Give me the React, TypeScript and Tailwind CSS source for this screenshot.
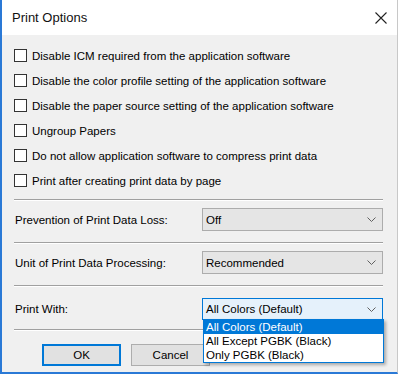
import React from "react";

const checks = [
  "Disable ICM required from the application software",
  "Disable the color profile setting of the application software",
  "Disable the paper source setting of the application software",
  "Ungroup Papers",
  "Do not allow application software to compress print data",
  "Print after creating print data by page",
];

function Sep() {
  return (
    <div className="flex flex-col">
      <div className="h-px bg-[#a0a0a0]" />
      <div className="h-px bg-white" />
    </div>
  );
}

function Chevron() {
  return (
    <svg width="9" height="5" viewBox="0 0 9 5" className="shrink-0">
      <path d="M0.5 0.5 L4.5 4.5 L8.5 0.5" fill="none" stroke="#606060" strokeWidth="1" />
    </svg>
  );
}

function Select({ value, focused }: { value: string; focused?: boolean }) {
  return (
    <div
      className={
        focused
          ? "w-[181px] h-[22px] border border-[#0078d7] bg-[#e5f1fb] flex items-center justify-between pl-[3px] pr-[6px]"
          : "w-[181px] h-[23px] border border-[#acacac] bg-[#e5e5e5] flex items-center justify-between pl-[3px] pr-[6px]"
      }
    >
      <span className="text-black">{value}</span>
      <Chevron />
    </div>
  );
}

export default function App() {
  return (
    <div className="w-[400px] h-[376px] bg-white overflow-hidden relative text-[11.5px] leading-[14px] text-black" style={{ fontFamily: '"Liberation Sans", Arial, sans-serif' }}>
      <div className="w-[398px] h-[374px] border-l-2 border-b-2 border-r border-l-[#2a79d6] border-b-[#2a79d6] border-r-[#c8c8c8] flex flex-col">
        <div className="h-[35px] bg-white flex items-center justify-between pl-[10px] pr-[10px]">
          <span className="text-[13px] text-[#111]">Print Options</span>
          <svg width="12" height="12" viewBox="0 0 12 12">
            <path d="M0.5 0.5 L11.5 11.5 M11.5 0.5 L0.5 11.5" stroke="#222" strokeWidth="1.1" />
          </svg>
        </div>
        <div className="flex-1 bg-[#f0f0f0] pl-[12px] pr-[14px] pt-[8px] flex flex-col">
          <div className="flex flex-col">
            {checks.map((c) => (
              <div key={c} className="h-[25px] flex items-center gap-[5px]">
                <div className="w-[13px] h-[13px] border border-[#333] bg-white shrink-0" />
                <span>{c}</span>
              </div>
            ))}
          </div>
          <div className="mt-[6px]">
            <Sep />
          </div>
          <div className="pt-[7px] pb-[11px] flex items-center justify-between">
            <span className="ml-px">Prevention of Print Data Loss:</span>
            <Select value="Off" />
          </div>
          <Sep />
          <div className="pt-[7px] pb-[11px] flex items-center justify-between">
            <span className="ml-px">Unit of Print Data Processing:</span>
            <Select value="Recommended" />
          </div>
          <Sep />
          <div className="pt-[11px] pb-[9px] flex items-center justify-between">
            <span className="ml-px">Print With:</span>
            <Select value="All Colors (Default)" focused />
          </div>
          <Sep />
          <div className="pt-[13px] pl-[28px] flex gap-[10px]">
            <div className="w-[79px] h-[22px] border-2 border-[#0078d7] bg-[#e1e1e1] flex items-center justify-center">OK</div>
            <div className="w-[79px] h-[22px] border border-[#adadad] bg-[#e1e1e1] flex items-center justify-center">Cancel</div>
          </div>
        </div>
      </div>
      <div className="absolute left-[203px] top-[319px] w-[181px] border border-[#0078d7] bg-white flex flex-col shadow-[2px_2px_3px_rgba(0,0,0,0.3)]">
        <div className="h-[14px] bg-[#0078d7] text-white pl-[2px] flex items-center">All Colors (Default)</div>
        <div className="h-[14px] pl-[2px] flex items-center">All Except PGBK (Black)</div>
        <div className="h-[14px] pl-[2px] flex items-center">Only PGBK (Black)</div>
      </div>
    </div>
  );
}
